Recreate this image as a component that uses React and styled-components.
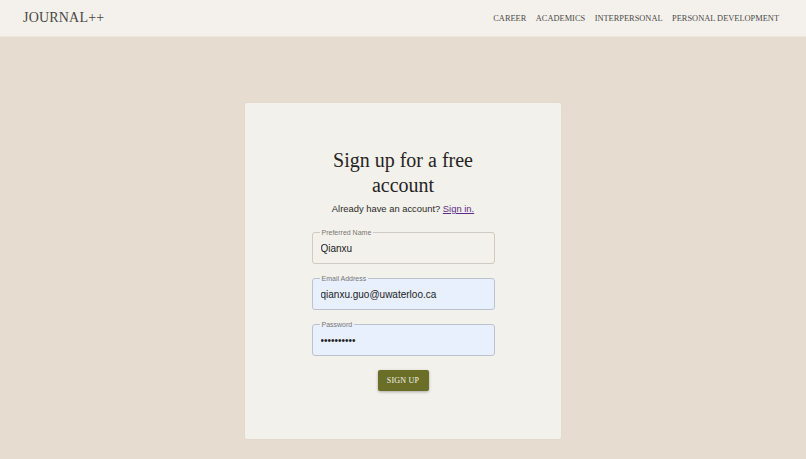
import React from 'react'
import styled, { createGlobalStyle } from 'styled-components'

// Global
const GlobalStyle = createGlobalStyle`
    html, body {
        margin: 0;
        padding: 0;
        background: #e6ddd0;
    }
    body {
        font-family: "Liberation Serif", "Times New Roman", serif;
        min-height: 459px;
    }
`

// Style
const Page = styled.div`
    min-height: 459px;
    display: flex;
    flex-direction: column;
`

const Header = styled.header`
    height: 37px;
    background: #f4f1ec;
    border-bottom: 1px solid #ece6dd;
    display: flex;
    align-items: center;
    justify-content: space-between;
    padding: 0 27px 0 23px;
    box-sizing: border-box;
`

const Logo = styled.div`
    font-size: 14px;
    color: #4a4744;
    letter-spacing: 0.2px;
`

const Nav = styled.nav`
    display: flex;
    gap: 9.5px;
`

const NavLink = styled.a`
    font-size: 8.4px;
    color: #4d4a47;
    text-decoration: none;
    text-transform: uppercase;
`

const Main = styled.main`
    display: flex;
    justify-content: center;
    padding-top: 66px;
`

const Card = styled.section`
    width: 316px;
    height: 336px;
    background: #f3f1ec;
    border-radius: 2px;
    box-shadow: 0 0 2px rgba(0, 0, 0, 0.06);
    display: flex;
    flex-direction: column;
    align-items: center;
    padding-top: 45px;
    box-sizing: border-box;
`

const Title = styled.h1`
    margin: 0;
    font-weight: normal;
    font-size: 20px;
    line-height: 25px;
    color: #262422;
    text-align: center;
    width: 170px;
`

const SubText = styled.p`
    margin: 5px 0 14px;
    font-family: "Liberation Sans", Arial, sans-serif;
    font-size: 9.4px;
    color: #2b2a28;
`

const SignInLink = styled.a`
    color: #5b2a86;
    text-decoration: underline;
`

const Form = styled.form`
    display: flex;
    flex-direction: column;
    align-items: center;
    gap: 10px;
`

const Field = styled.fieldset`
    width: 183px;
    margin: 0;
    padding: 0 7px 3px;
    box-sizing: border-box;
    border: 1px solid ${props => (props.$filled ? '#bcc3cf' : '#cfcac2')};
    border-radius: 3px;
    background: ${props => (props.$filled ? '#e8f0fe' : 'transparent')};
`

const Legend = styled.legend`
    font-family: "Liberation Sans", Arial, sans-serif;
    font-size: 7px;
    color: #7a7671;
    padding: 0 2px;
    margin-left: 0;
    line-height: 9px;
`

const Input = styled.input`
    display: block;
    width: 100%;
    height: 23px;
    border: none;
    outline: none;
    background: transparent;
    font-family: "Liberation Sans", Arial, sans-serif;
    font-size: 10px;
    color: #222;
    padding: 0 0 0 1px;
    margin: 0;
`

const Button = styled.button`
    margin-top: 4px;
    width: 51px;
    height: 21px;
    border: none;
    border-radius: 2px;
    background: #6a6e27;
    color: #f5f3ea;
    font-family: "Liberation Serif", "Times New Roman", serif;
    font-size: 8px;
    letter-spacing: 0.2px;
    text-transform: uppercase;
    box-shadow: 0 1px 3px rgba(0, 0, 0, 0.3);
    cursor: pointer;
`

const navItems = ['Career', 'Academics', 'Interpersonal', 'Personal Development']

// Component
export default function App() {
    return (
        <Page>
            <GlobalStyle />
            <Header>
                <Logo>JOURNAL++</Logo>
                <Nav>
                    {navItems.map((item) => (
                        <NavLink key={item} href="#">{item}</NavLink>
                    ))}
                </Nav>
            </Header>
            <Main>
                <Card>
                    <Title>Sign up for a free account</Title>
                    <SubText>
                        Already have an account? <SignInLink href="#">Sign in.</SignInLink>
                    </SubText>
                    <Form onSubmit={(e) => e.preventDefault()}>
                        <Field>
                            <Legend>Preferred Name</Legend>
                            <Input defaultValue="Qianxu" />
                        </Field>
                        <Field $filled>
                            <Legend>Email Address</Legend>
                            <Input defaultValue="qianxu.guo@uwaterloo.ca" />
                        </Field>
                        <Field $filled>
                            <Legend>Password</Legend>
                            <Input type="password" defaultValue="qianxuguo1" />
                        </Field>
                        <Button type="submit">Sign up</Button>
                    </Form>
                </Card>
            </Main>
        </Page>
    )
}
